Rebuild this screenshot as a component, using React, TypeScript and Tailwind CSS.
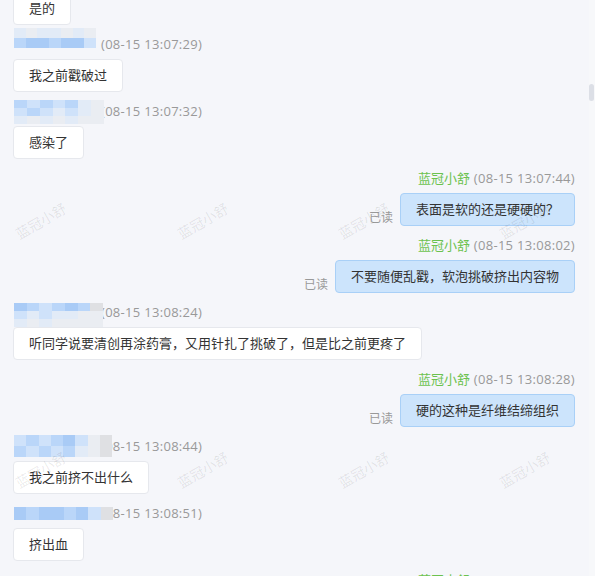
import React from "react";

const A = "bg-[#a9cbf6]";
const B = "bg-[#bad6f9]";
const C = "bg-[#cfe2fa]";
const D = "bg-[#e2ebf7]";
const E = "bg-[#eaedf2]";
const F = "bg-[#dfe0e3]";

type MosaicSpec = { w: string; top: string; h: string; rows: string[][] };

function Mosaic({ spec }: { spec: MosaicSpec }) {
  return (
    <div className={`absolute left-[1px] ${spec.top} ${spec.w} ${spec.h} flex flex-col blur-[0.6px]`}>
      {spec.rows.map((row, i) => (
        <div key={i} className="flex flex-1">
          {row.map((c, j) => (
            <div key={j} className={`flex-1 ${c}`} />
          ))}
        </div>
      ))}
    </div>
  );
}

function Left({ time, text, mosaic }: { time: string; text: string; mosaic: MosaicSpec }) {
  return (
    <div className="flex flex-col items-start mb-[9px]">
      <div className="relative h-[20px] flex items-center text-[13px] leading-[20px] text-[#999999]">
        <span className="inline-block w-[88px]" />
        <span className="tracking-[0.3px]">{time}</span>
        <Mosaic spec={mosaic} />
      </div>
      <div className="mt-[5px] h-[33px] flex items-center px-[15px] bg-white border border-[#e6e8ed] rounded-[4px] text-[13px] text-[#333333] whitespace-nowrap">
        {text}
      </div>
    </div>
  );
}

function Right({ time, text }: { time: string; text: string }) {
  return (
    <div className="flex flex-col items-end mb-[9px]">
      <div className="h-[20px] leading-[20px] text-[13px] whitespace-nowrap">
        <span className="text-[#6cc24f]">蓝冠小舒</span>
        <span className="text-[#999999] tracking-[0.3px]"> {time}</span>
      </div>
      <div className="mt-[5px] flex items-end gap-[7px]">
        <span className="text-[12px] leading-[16px] text-[#999999]">已读</span>
        <div className="h-[33px] flex items-center px-[15px] bg-[#cce4fc] border border-[#a9d0f7] rounded-[4px] text-[13px] text-[#333333] whitespace-nowrap">
          {text}
        </div>
      </div>
    </div>
  );
}

const m1: MosaicSpec = {
  w: "w-[82px]",
  top: "top-[-6px]",
  h: "h-[20px]",
  rows: [
    [D, E, D, D, E, D, E],
    [B, A, A, B, A, A, C],
  ],
};
const m2: MosaicSpec = {
  w: "w-[90px]",
  top: "top-[-1px]",
  h: "h-[24px]",
  rows: [
    [B, C, B, C, B, D, E],
    [C, B, C, D, C, D, E],
    [D, E, D, E, D, E, E],
  ],
};
const m3: MosaicSpec = {
  w: "w-[89px]",
  top: "top-[1px]",
  h: "h-[24px]",
  rows: [
    [A, B, C, B, A, B, F],
    [C, D, C, D, D, E, E],
    [D, E, D, E, E, E, E],
  ],
};
const m4: MosaicSpec = {
  w: "w-[98px]",
  top: "top-[-1px]",
  h: "h-[22px]",
  rows: [
    [C, B, C, B, A, C, E, F],
    [B, C, B, C, B, D, E, F],
  ],
};
const m5: MosaicSpec = {
  w: "w-[99px]",
  top: "top-[4px]",
  h: "h-[13px]",
  rows: [[A, B, A, A, B, A, C, F]],
};

const marks = [
  "left-[41px] top-[221px]",
  "left-[203px] top-[221px]",
  "left-[364px] top-[221px]",
  "left-[525px] top-[221px]",
  "left-[41px] top-[470px]",
  "left-[203px] top-[470px]",
  "left-[364px] top-[470px]",
  "left-[525px] top-[470px]",
];

export default function App() {
  return (
    <div
      className="relative w-[595px] h-[576px] overflow-hidden bg-[#f5f6fa]"
      style={{ fontFamily: '"Open Sans", "Noto Sans CJK SC", sans-serif' }}
    >
      <div className="flex flex-col pl-[13px] pr-[20px] mt-[-8px]">
        <div className="flex flex-col items-start mb-[9px]">
          <div className="h-[33px] flex items-center px-[15px] bg-white border border-[#e6e8ed] rounded-[4px] text-[13px] text-[#333333]">
            是的
          </div>
        </div>
        <Left time="(08-15 13:07:29)" text="我之前戳破过" mosaic={m1} />
        <Left time="(08-15 13:07:32)" text="感染了" mosaic={m2} />
        <Right time="(08-15 13:07:44)" text="表面是软的还是硬硬的？" />
        <Right time="(08-15 13:08:02)" text="不要随便乱戳，软泡挑破挤出内容物" />
        <Left
          time="(08-15 13:08:24)"
          text="听同学说要清创再涂药膏，又用针扎了挑破了，但是比之前更疼了"
          mosaic={m3}
        />
        <Right time="(08-15 13:08:28)" text="硬的这种是纤维结缔组织" />
        <Left time="(08-15 13:08:44)" text="我之前挤不出什么" mosaic={m4} />
        <Left time="(08-15 13:08:51)" text="挤出血" mosaic={m5} />
        <Right time="(08-15 13:08:58)" text="好的" />
      </div>

      {/* watermark overlay */}
      <div className="pointer-events-none absolute inset-0">
        {marks.map((m, i) => (
          <div key={i} className={`absolute ${m} w-0 h-0`}>
            <span className="absolute left-0 top-0 -translate-x-1/2 -translate-y-1/2 -rotate-[30deg] whitespace-nowrap text-[14px] text-black/[0.09]">
              蓝冠小舒
            </span>
          </div>
        ))}
      </div>

      {/* scrollbar */}
      <div className="absolute right-0 top-0 w-[6px] h-full bg-[#f7f8fa]">
        <div className="absolute left-0 top-[84px] w-[5px] h-[17px] rounded-[3px] bg-[#dcdfe6]" />
      </div>
    </div>
  );
}
